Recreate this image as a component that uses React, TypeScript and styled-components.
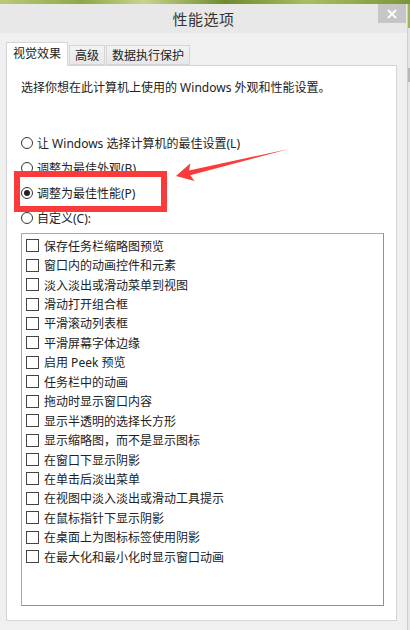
import React from 'react';
import styled, { createGlobalStyle } from 'styled-components';

const GlobalStyle = createGlobalStyle`
  html, body {
    margin: 0;
    padding: 0;
    background: #f0f0f0;
    overflow: hidden;
  }
  body {
    font-family: "Noto Sans", "Noto Sans CJK SC", sans-serif;
    color: #222;
  }
`;

const Page = styled.div`
  position: relative;
  width: 410px;
  height: 630px;
  display: flex;
  flex-direction: column;
  overflow: hidden;
`;

const Wallpaper = styled.div`
  height: 4px;
  flex-shrink: 0;
  background: linear-gradient(90deg, #b9c97a 0%, #8fa845 20%, #c7d48e 35%, #6f8a2e 55%, #a9bd62 75%, #7b963a 100%);
`;

const Desktop = styled.div`
  flex: 1;
  display: flex;
`;

const Window = styled.div`
  width: 407px;
  display: flex;
  flex-direction: column;
  background: #f0f0f0;
  border-right: 1px solid #cfcfcf;
`;

const SideStrip = styled.div`
  flex: 1;
  background: linear-gradient(180deg, #9fb456 0px, #9fb456 24px, #e4e4e4 24px, #e4e4e4 64px, #b8b8b8 64px, #b8b8b8 78px, #e6e6e6 78px);
`;

const TitleBar = styled.div`
  position: relative;
  height: 29px;
  display: flex;
  align-items: center;
  justify-content: center;
  background: #e8e8e8;
`;

const Title = styled.div`
  font-size: 15px;
  color: #333;
  letter-spacing: 0.5px;
`;

const CloseButton = styled.div`
  position: absolute;
  top: 0;
  right: 1px;
  width: 28px;
  height: 19px;
  background: #c6c6c6;
  display: flex;
  align-items: center;
  justify-content: center;
`;

const Body = styled.div`
  flex: 1;
  padding: 9px 10px 0 6px;
  display: flex;
  flex-direction: column;
`;

const TabRow = styled.div`
  display: flex;
  align-items: flex-end;
  gap: 1px;
  position: relative;
  z-index: 1;
`;

const Tab = styled.div<{ $active?: boolean }>`
  height: ${(p) => (p.$active ? '24px' : '20px')};
  padding: ${(p) => (p.$active ? '0 6px' : '0 5px')};
  margin-bottom: ${(p) => (p.$active ? '-1px' : '0')};
  display: flex;
  align-items: center;
  font-size: 12px;
  color: #222;
  box-sizing: border-box;
  border: 1px solid #d5d5d5;
  border-bottom: ${(p) => (p.$active ? 'none' : '1px solid #d5d5d5')};
  background: ${(p) => (p.$active ? '#ffffff' : 'linear-gradient(180deg, #f3f3f3, #e7e7e7)')};
  padding-bottom: ${(p) => (p.$active ? '3px' : '0')};
`;

const Panel = styled.div`
  width: 391px;
  height: 556px;
  box-sizing: border-box;
  background: #fff;
  border: 1px solid #d5d5d5;
  padding: 0 13px 0 14px;
  display: flex;
  flex-direction: column;
`;

const Intro = styled.div`
  margin-top: 14px;
  font-size: 12px;
  line-height: 16px;
`;

const RadioGroup = styled.div`
  margin-top: 34px;
  display: flex;
  flex-direction: column;
`;

const RadioRow = styled.label`
  height: 25px;
  display: flex;
  align-items: center;
  gap: 4px;
  font-size: 12px;
`;

const RadioDot = styled.span<{ $checked?: boolean }>`
  width: 12px;
  height: 12px;
  box-sizing: border-box;
  border-radius: 50%;
  border: 1px solid #333;
  background: #fff;
  display: flex;
  align-items: center;
  justify-content: center;

  &::after {
    content: '';
    width: 6px;
    height: 6px;
    border-radius: 50%;
    background: #222;
    display: ${(p) => (p.$checked ? 'block' : 'none')};
  }
`;

const ListBox = styled.div`
  margin-top: 3px;
  width: 363px;
  height: 373px;
  box-sizing: border-box;
  border: 1px solid #a9a9a9;
  border-right-color: #8d9096;
  border-bottom-color: #8d9096;
  padding: 2px 0 0 4px;
  display: flex;
  flex-direction: column;
`;

const CheckRow = styled.div`
  height: 19.45px;
  display: flex;
  align-items: center;
  gap: 5px;
  font-size: 12px;
`;

const CheckBox = styled.span`
  width: 13px;
  height: 13px;
  box-sizing: border-box;
  border: 1px solid #444;
  background: #fff;
  flex-shrink: 0;
`;

const Annotation = styled.svg`
  position: absolute;
  left: 0;
  top: 0;
  pointer-events: none;
`;

const radios = [
  { label: '让 Windows 选择计算机的最佳设置(L)', checked: false },
  { label: '调整为最佳外观(B)', checked: false },
  { label: '调整为最佳性能(P)', checked: true },
  { label: '自定义(C):', checked: false },
];

const effects = [
  '保存任务栏缩略图预览',
  '窗口内的动画控件和元素',
  '淡入淡出或滑动菜单到视图',
  '滑动打开组合框',
  '平滑滚动列表框',
  '平滑屏幕字体边缘',
  '启用 Peek 预览',
  '任务栏中的动画',
  '拖动时显示窗口内容',
  '显示半透明的选择长方形',
  '显示缩略图，而不是显示图标',
  '在窗口下显示阴影',
  '在单击后淡出菜单',
  '在视图中淡入淡出或滑动工具提示',
  '在鼠标指针下显示阴影',
  '在桌面上为图标标签使用阴影',
  '在最大化和最小化时显示窗口动画',
];

const App: React.FC = () => {
  return (
    <>
      <GlobalStyle />
      <Page>
        <Wallpaper />
        <Desktop>
          <Window>
            <TitleBar>
              <Title>性能选项</Title>
              <CloseButton>
                <svg width="10" height="10" viewBox="0 0 10 10">
                  <path d="M1 1 L9 9 M9 1 L1 9" stroke="#fff" strokeWidth="1.8" />
                </svg>
              </CloseButton>
            </TitleBar>
            <Body>
              <TabRow>
                <Tab $active>视觉效果</Tab>
                <Tab>高级</Tab>
                <Tab>数据执行保护</Tab>
              </TabRow>
              <Panel>
                <Intro>选择你想在此计算机上使用的 Windows 外观和性能设置。</Intro>
                <RadioGroup>
                  {radios.map((r) => (
                    <RadioRow key={r.label}>
                      <RadioDot $checked={r.checked} />
                      {r.label}
                    </RadioRow>
                  ))}
                </RadioGroup>
                <ListBox>
                  {effects.map((e) => (
                    <CheckRow key={e}>
                      <CheckBox />
                      {e}
                    </CheckRow>
                  ))}
                </ListBox>
              </Panel>
            </Body>
          </Window>
          <SideStrip />
        </Desktop>

        {/* red highlight box and arrow pointing at the selected option */}
        <Annotation width="410" height="630" viewBox="0 0 410 630">
          <rect x="17" y="174" width="147" height="35" fill="none" stroke="#fb3b3b" strokeWidth="6" />
          <polygon
            points="176,176 190.4,163.3 189,170.4 289,149 190.2,175.2 194.6,180.9"
            fill="#fb3b3b"
          />
        </Annotation>
      </Page>
    </>
  );
};

export default App;
